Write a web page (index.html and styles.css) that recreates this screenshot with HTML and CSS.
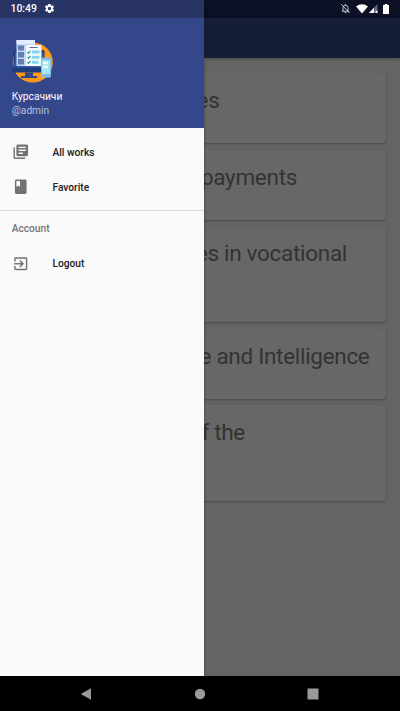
FILE: index.html
```html
<!DOCTYPE html>
<html lang="en">
<head>
<meta charset="utf-8">
<title>Курсачичи</title>
<link rel="stylesheet" href="styles.css">
</head>
<body>
<div class="phone">
  <div class="main">
    <aside class="drawer">
      <header class="profile">
        <div class="status status-left">
          <span>10:49</span>
          <svg class="gear" viewBox="0 0 24 24"><path d="M19.4 13a7.500 7.500 0 0 0 0-2l2.100-1.700a.5.5 0 0 0 .1-.6l-2-3.500a.5.5 0 0 0-.6-.2l-2.500 1a7.300 7.300 0 0 0-1.700-1l-.4-2.600a.5.5 0 0 0-.5-.4h-4a.5.5 0 0 0-.5.4L9 5a7.700 7.700 0 0 0-1.700 1l-2.500-1a.5.5 0 0 0-.6.2l-2 3.500a.5.5 0 0 0 .1.6L4.500 11a8 8 0 0 0 0 2l-2.100 1.700a.5.5 0 0 0-.1.6l2 3.500c.1.200.4.300.6.200l2.500-1a7.300 7.300 0 0 0 1.700 1l.4 2.600c0 .2.200.4.500.4h4c.3 0 .5-.2.500-.4L15 19a7.700 7.700 0 0 0 1.700-1l2.500 1c.2.100.5 0 .6-.2l2-3.500a.5.5 0 0 0-.1-.6zM12 15.600A3.600 3.600 0 1 1 12 8.400a3.600 3.600 0 0 1 0 7.200z"/></svg>
        </div>
        <svg class="avatar" viewBox="0 0 42 44">
          <circle cx="20.800" cy="22.500" r="20" fill="#ff9a12"/>
          <rect x="1.500" y="10" width="31" height="20" rx="1.500" fill="#213f7d"/>
          <rect x="3" y="12" width="28" height="16" fill="#365aa4"/>
          <rect x="0" y="27.500" width="32" height="5" fill="#213c7c"/>
          <rect x="13" y="32.500" width="8" height="4" fill="#2c4a8c"/>
          <rect x="9" y="36" width="16" height="2" fill="#2c4a8c"/>
          <rect x="4.500" y="0" width="18.500" height="26" fill="#c3d6f8"/>
          <path d="M4.500 0H23v4H4.500z" fill="#e3edff"/>
          <path d="M6 5.500h6v5H6zm0 6.500h6v5.500H6zm0 7h6v5.500H6z" fill="#647db4"/>
          <rect x="14" y="5" width="15.500" height="21" fill="#f5faff"/>
          <path d="M17.500 7.500h8" stroke="#5a6ba0" stroke-width="1"/>
          <path d="M20 12h7.500m-7.500 5.200h7.500m-7.500 5h6.500" stroke="#80d5f5" stroke-width="3"/>
          <path d="M15.500 12l1 1.200 2-2.400m-3 6.200l1 1.200 2-2.400m-3 6.200l1 1.200 2-2.400" fill="none" stroke="#26a69a" stroke-width="1.200"/>
          <rect x="29" y="17.500" width="10" height="20" rx="1.500" fill="#83bce7"/>
          <rect x="30" y="20" width="8" height="14" fill="#a6e4ee"/>
          <path d="M31 23h5m-5 4h5" stroke="#e8fbff" stroke-width="2.500"/>
        </svg>
        <div class="name">Курсачичи</div>
        <div class="handle">@admin</div>
      </header>
      <nav class="menu">
        <a class="item"><svg viewBox="0 0 24 24"><path d="M4 6H2v14c0 1.100.9 2 2 2h14v-2H4V6zm16-4H8c-1.100 0-2 .9-2 2v12c0 1.100.9 2 2 2h12c1.100 0 2-.9 2-2V4c0-1.100-.9-2-2-2zm-1 9H9V9h10v2zm-4 4H9v-2h6v2zm4-8H9V5h10v2z"/></svg><span>All works</span></a>
        <a class="item"><svg viewBox="0 0 24 24"><path d="M18 2H6c-1.100 0-2 .9-2 2v16c0 1.100.9 2 2 2h12c1.100 0 2-.9 2-2V4c0-1.100-.9-2-2-2zM6 4h5v8l-2.500-1.500L6 12V4z"/></svg><span>Favorite</span></a>
      </nav>
      <div class="section">Account</div>
      <a class="item"><svg viewBox="0 0 24 24"><path d="M10.090 15.590L11.500 17l5-5-5-5-1.410 1.410L12.670 11H3v2h9.670l-2.580 2.590zM19 3H5a2 2 0 0 0-2 2v4h2V5h14v14H5v-4H3v4a2 2 0 0 0 2 2h14c1.100 0 2-.9 2-2V5c0-1.100-.9-2-2-2z"/></svg>Logout</a>
    </aside>
    <main class="content">
      <div class="status status-right">
        <svg class="bell" viewBox="0 0 24 24"><path d="M6.500 17.500V10.500a5.500 5.500 0 0 1 11 0v7M4 18h16M10 21h4M12 2v3M3 3l18 19" fill="none" stroke="#d5d7de" stroke-width="2"/></svg>
        <svg class="wifi" viewBox="0 0 12 10"><path d="M0 2.500Q6-1.800 12 2.500L6 9.500z" fill="#fff"/></svg>
        <svg class="signal" viewBox="0 0 10 10"><path d="M9.500 0v10H0z" fill="#62667a"/><path d="M5.500 4.300V10H0zM7.300 7.500h2V10h-2z" fill="#fff"/></svg>
        <svg class="battery" viewBox="0 0 6 10"><path d="M1.700 0h2.600v1H6v9H0V1h1.700z" fill="#fff"/></svg>
      </div>
      <div class="appbar"></div>
      <div class="list">
        <article class="card"><h2 class="title t1">es</h2></article>
        <article class="card"><h2 class="title t2">payments</h2></article>
        <article class="card tall"><h2 class="title t3">es in vocational</h2></article>
        <article class="card"><h2 class="title t4">e and Intelligence</h2></article>
        <article class="card tall"><h2 class="title t5">f the</h2></article>
      </div>
    </main>
  </div>
  <footer class="navbar">
    <svg viewBox="0 0 12 12"><path d="M11 .3v11.400L.7 6z"/></svg>
    <svg viewBox="0 0 12 12"><circle cx="6" cy="6" r="5.200"/></svg>
    <svg viewBox="0 0 12 12"><rect x=".5" y=".5" width="11" height="11" rx=".5"/></svg>
  </footer>
</div>
</body>
</html>
```
FILE: styles.css
```css
* { box-sizing: border-box; }
body { margin: 0; font-family: Roboto, sans-serif; }
svg { display: block; flex: none; }
.phone { width: 400px; height: 711px; display: flex; flex-direction: column; overflow: hidden; background: #000; }
.main { height: 676px; display: flex; }
.drawer { width: 204px; flex: none; background: #fafafa; z-index: 1; box-shadow: 0 0 3px rgba(0,0,0,.35); }
.profile { height: 128.300px; background: #34478a; color: #fff; }
.status { height: 17.500px; display: flex; align-items: center; }
.status-left { background: #283463; padding-left: 10.500px; gap: 7.500px; font-size: 10.400px; font-weight: 500; line-height: 18px; }
.status-left span { padding-top: 1px; }
.gear { width: 11px; height: 11px; fill: #fff; }
.avatar { width: 42px; height: 44px; margin: 22.500px 0 0 12px; }
.name { margin: 6px 0 0 11.700px; font-size: 10.200px; line-height: 14px; }
.handle { margin-left: 11.700px; font-size: 10.200px; line-height: 14px; color: #b9c0d9; }
.menu { padding-top: 6px; height: 82.700px; border-bottom: 1px solid #dcdcdc; }
.item { height: 35px; padding-left: 11.700px; display: flex; align-items: center; gap: 23.300px; font-size: 10.200px; line-height: 13px; font-weight: 500; color: #212121; }
.item span { padding-top: 1px; }
.item svg { width: 17.500px; height: 17.500px; fill: #737373; }
.section { height: 35px; padding-left: 11.700px; line-height: 36px; font-size: 10.200px; font-weight: 500; color: #757575; }
.content { flex: 1; min-width: 0; overflow: hidden; background: #646464; }
.status-right { background: #0b1025; padding-left: 136px; }
.bell { width: 11px; height: 11px; margin-right: 5px; }
.wifi { width: 12px; height: 10px; margin-right: 1px; }
.signal { width: 9px; height: 9px; margin-right: 5px; }
.battery { width: 6px; height: 10px; }
.appbar { height: 40.500px; background: #161d37; box-shadow: 0 1px 3px rgba(0,0,0,.25); }
.list { padding: 15px 14.500px 0 0; display: flex; flex-direction: column; gap: 6.300px; }
.card { height: 70.400px; padding-top: 13px; background: #676767; border-radius: 0 3px 3px 0; box-shadow: 0 1px 2px rgba(0,0,0,.25); }
.tall { height: 96px; }
.title { margin: 0; font-size: 22.500px; letter-spacing: -.3px; line-height: 28px; font-weight: 400; color: #333; white-space: nowrap; display: flex; justify-content: flex-end; }
.t1 { width: 15.500px; }
.t2 { width: 93px; }
.t3 { width: 143px; }
.t4 { width: 165.500px; }
.t5 { width: 41px; }
.navbar { height: 35px; display: flex; justify-content: space-between; align-items: center; padding: 0 81px 0 80px; }
.navbar svg { width: 12px; height: 12px; fill: #999; }
```
